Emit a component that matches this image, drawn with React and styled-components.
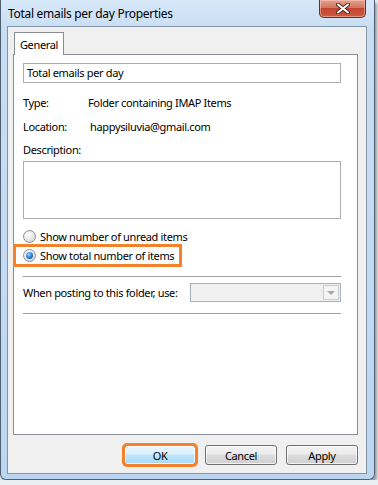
import React from 'react';
import styled, { createGlobalStyle } from 'styled-components';

const GlobalStyle = createGlobalStyle`
  html, body {
    margin: 0;
    padding: 0;
    background: #e9eef3;
  }
  body {
    font-family: "Noto Sans", "Open Sans", sans-serif;
    font-size: 11px;
    letter-spacing: -0.35px;
    color: #000;
  }
`;

const Window = styled.div`
  width: 375px;
  height: 480px;
  border: 1px solid #4f5f72;
  border-top: none;
  border-radius: 0 0 6px 6px;
  background: linear-gradient(180deg, #d6e7f8 0px, #c9def4 30px, #bcd6f1 100%);
  display: flex;
  flex-direction: column;
  padding: 0 7px 5px 6px;
  box-sizing: border-box;
  box-shadow: 2px 3px 3px rgba(0, 0, 0, 0.35);
`;

const TitleBar = styled.div`
  height: 28px;
  display: flex;
  align-items: flex-start;
  justify-content: space-between;
`;

const Title = styled.div`
  font-size: 12px;
  letter-spacing: -0.3px;
  line-height: 16px;
  padding: 6px 0 0 1px;
  color: #000;
`;

const CloseButton = styled.div`
  width: 45px;
  height: 17px;
  margin-right: 1px;
  border: 1px solid #6b2a22;
  border-top: none;
  border-radius: 0 0 5px 5px;
  background: linear-gradient(180deg, #e4a291 0%, #d27560 45%, #c4452f 50%, #cf5a40 100%);
  display: flex;
  align-items: center;
  justify-content: center;
  box-shadow: inset 0 0 0 1px rgba(255, 210, 200, 0.5);
`;

const Client = styled.div`
  flex: 1;
  background: #f0f0f0;
  border: 1px solid #8595a8;
  display: flex;
  flex-direction: column;
  padding: 5px 8px 8px 5px;
`;

const TabStrip = styled.div`
  display: flex;
  padding-left: 1px;
  height: 23px;
  position: relative;
  z-index: 1;
`;

const Tab = styled.div`
  width: 50px;
  height: 23px;
  box-sizing: border-box;
  border: 1px solid #898c95;
  border-bottom: none;
  background: #fff;
  display: flex;
  align-items: center;
  justify-content: center;
  padding-top: 1px;
`;

const TabPanel = styled.div`
  height: 381px;
  box-sizing: border-box;
  margin-top: -1px;
  border: 1px solid #898c95;
  background: #fff;
  padding: 8px 16px 0 9px;
  display: flex;
  flex-direction: column;
`;

const TextBox = styled.div`
  height: ${(p) => p.h}px;
  box-sizing: border-box;
  border: 1px solid #abadb3;
  padding: 2px 3px;
  line-height: 14px;
`;

const InfoRow = styled.div`
  display: flex;
  height: 24px;
  align-items: center;
  margin-top: ${(p) => p.top || 0}px;
`;

const InfoLabel = styled.div`
  width: ${(p) => p.w}px;
`;

const Caption = styled.div`
  margin-top: 5px;
  line-height: 14px;
  margin-bottom: 4px;
`;

const RadioRow = styled.div`
  display: flex;
  align-items: center;
  height: 19px;
  gap: 4px;
  position: relative;
  margin-top: ${(p) => p.top || 0}px;

  &::after {
    content: '';
    display: ${(p) => (p.marked ? 'block' : 'none')};
    position: absolute;
    left: -10px;
    top: -2px;
    width: 169px;
    height: 23px;
    box-sizing: border-box;
    border: 3px solid #f5822b;
  }
`;

const Radio = styled.span`
  width: 13px;
  height: 13px;
  box-sizing: border-box;
  border-radius: 50%;
  border: 1px solid #8f8f8f;
  background: radial-gradient(circle at 40% 35%, #ffffff 0%, #e6e6e6 55%, #c8c8c8 100%);
  display: flex;
  align-items: center;
  justify-content: center;

  &::before {
    content: '';
    display: ${(p) => (p.checked ? 'block' : 'none')};
    width: 7px;
    height: 7px;
    border-radius: 50%;
    background: radial-gradient(circle at 40% 35%, #9fd6ff 0%, #2a7fd6 50%, #0c3f8a 100%);
  }
`;

const Separator = styled.div`
  height: 1px;
  background: #a0a0a0;
  margin-top: ${(p) => p.top}px;
`;

const PostRow = styled.div`
  display: flex;
  align-items: center;
  margin-top: 6px;
  height: 19px;
`;

const PostLabel = styled.div`
  width: 167px;
`;

const Combo = styled.div`
  flex: 1;
  height: 19px;
  box-sizing: border-box;
  border: 1px solid #a3b1c0;
  background: #f0f0f0;
  display: flex;
  justify-content: flex-end;
  padding: 1px;
`;

const ComboArrow = styled.div`
  width: 16px;
  box-sizing: border-box;
  border: 1px solid #c8ccd2;
  background: #f4f4f4;
  display: flex;
  align-items: center;
  justify-content: center;

  &::before {
    content: '';
    border-left: 4px solid transparent;
    border-right: 4px solid transparent;
    border-top: 4px solid #a5a5a5;
    margin-top: 1px;
  }
`;

const ButtonRow = styled.div`
  display: flex;
  justify-content: flex-end;
  gap: 9px;
  margin-top: 10px;
`;

const Button = styled.div`
  width: 72px;
  height: 20px;
  box-sizing: border-box;
  border: 1px solid #707070;
  border-radius: 3px;
  background: linear-gradient(180deg, #f2f2f2 0%, #ebebeb 45%, #dddddd 50%, #cfcfcf 100%);
  display: flex;
  align-items: center;
  justify-content: center;
  box-shadow: inset 0 0 0 1px rgba(255, 255, 255, 0.7);
  ${(p) =>
    p.marked &&
    `
    background: linear-gradient(180deg, #eaf6fd 0%, #d9f0fc 45%, #bee6fd 50%, #a7d9f5 100%);
    outline: 3px solid #f5822b;
    outline-offset: -1px;
  `}
`;

export default function App() {
  return (
    <>
      <GlobalStyle />
      <Window>
        <TitleBar>
          <Title>Total emails per day Properties</Title>
          <CloseButton>
            <svg width="14" height="11" viewBox="0 0 14 11">
              <path
                d="M2 1.5 L12 9.5 M12 1.5 L2 9.5"
                stroke="#4a2a26"
                strokeWidth="4"
                strokeLinecap="round"
              />
              <path
                d="M2 1.5 L12 9.5 M12 1.5 L2 9.5"
                stroke="#ffffff"
                strokeWidth="2"
                strokeLinecap="round"
              />
            </svg>
          </CloseButton>
        </TitleBar>
        <Client>
          <TabStrip>
            <Tab>General</Tab>
          </TabStrip>
          <TabPanel>
            <TextBox h={20}>Total emails per day</TextBox>
            <InfoRow top={7}>
              <InfoLabel w={65}>Type:</InfoLabel>
              <div>Folder containing IMAP Items</div>
            </InfoRow>
            <InfoRow>
              <InfoLabel w={67}>Location:</InfoLabel>
              <div>happysiluvia@gmail.com</div>
            </InfoRow>
            <Caption>Description:</Caption>
            <TextBox h={58} />
            <RadioRow top={8}>
              <Radio />
              <span>Show number of unread items</span>
            </RadioRow>
            <RadioRow marked>
              <Radio checked />
              <span>Show total number of items</span>
            </RadioRow>
            <Separator top={11} />
            <PostRow>
              <PostLabel>When posting to this folder, use:</PostLabel>
              <Combo>
                <ComboArrow />
              </Combo>
            </PostRow>
            <Separator top={11} />
          </TabPanel>
          <ButtonRow>
            <Button marked>OK</Button>
            <Button>Cancel</Button>
            <Button>Apply</Button>
          </ButtonRow>
        </Client>
      </Window>
    </>
  );
}
